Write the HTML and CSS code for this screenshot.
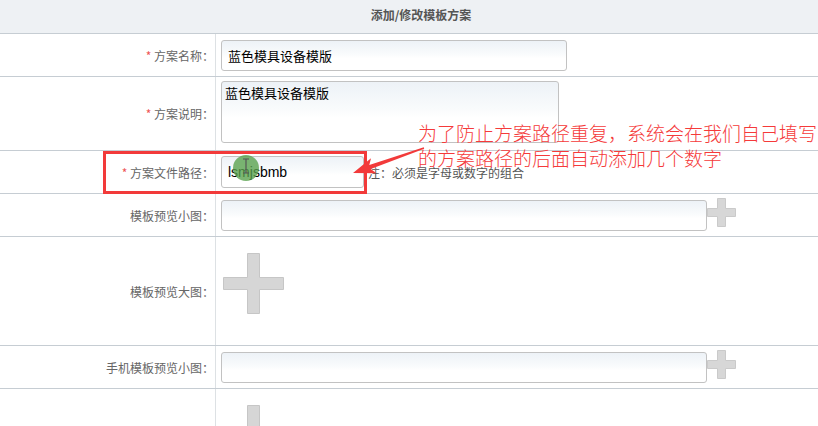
FILE: index.html
```html
<!DOCTYPE html>
<html lang="zh-CN">
<head>
  <meta charset="UTF-8">
  <title>添加/修改模板方案</title>
  <link rel="stylesheet" href="styles.css">
</head>
<body>

<div class="page">
    <div class="head">添加/修改模板方案</div>

    <div class="row">
        <div class="label"><span class="req">*</span>&nbsp;方案名称：</div>
        <div class="field"><input class="txt name" type="text" value="蓝色模具设备模版"></div>
    </div>

    <div class="row tall-2">
        <div class="label"><span class="req">*</span>&nbsp;方案说明：</div>
        <div class="field top-4"><textarea class="txt desc">蓝色模具设备模版</textarea></div>
    </div>

    <div class="row">
        <div class="label"><span class="req">*</span>&nbsp;方案文件路径：</div>
        <div class="field">
            <input class="txt path" type="text" value="lsmjsbmb">
            <span class="hint">注：必须是字母或数字的组合</span>
        </div>
    </div>

    <div class="row">
        <div class="label">模板预览小图：</div>
        <div class="field">
            <input class="txt upload" type="text" value="">
            <svg class="plus-s" width="29" height="29" viewBox="0 0 29 29">
                <path d="M10.5 0.5h8v10h10v8h-10v10h-8v-10h-10v-8h10z"/>
            </svg>
        </div>
    </div>

    <div class="row tall-5">
        <div class="label">模板预览大图：</div>
        <div class="field top-16">
            <svg class="plus-l" width="61" height="61" viewBox="0 0 61 61">
                <path d="M24.5 0.5h12v24h24v12h-24v24h-12v-24h-24v-12h24z"/>
            </svg>
        </div>
    </div>

    <div class="row">
        <div class="label">手机模板预览小图：</div>
        <div class="field">
            <input class="txt upload" type="text" value="">
            <svg class="plus-s" width="29" height="29" viewBox="0 0 29 29">
                <path d="M10.5 0.5h8v10h10v8h-10v10h-8v-10h-10v-8h10z"/>
            </svg>
        </div>
    </div>

    <div class="row tall-5">
        <div class="label">手机模板预览大图：</div>
        <div class="field top-16">
            <svg class="plus-l" width="61" height="61" viewBox="0 0 61 61">
                <path d="M24.5 0.5h12v24h24v12h-24v24h-12v-24h-24v-12h24z"/>
            </svg>
        </div>
    </div>
</div>

<!-- 截图标注 -->
<div class="mark-box"></div>
<div class="click-dot">
    <svg width="26" height="26" viewBox="0 0 26 26">
        <path d="M13 4v14M10 4h6M10 18h6" stroke="#555" stroke-width="1.2" fill="none"/>
    </svg>
</div>
<svg class="mark-arrow" width="818" height="426" viewBox="0 0 818 426">
    <polygon points="353,173 371,158.2 369.3,165.1 423.8,147.3 424.2,148.7 370.7,168.9 376.4,173.2"/>
</svg>
<div class="mark-text">为了防止方案路径重复，系统会在我们自己填写<br>的方案路径的后面自动添加几个数字</div>

</body>
</html>
```

FILE: styles.css
```css
body {
    margin: 0;
    font-family: "Noto Sans CJK SC", sans-serif;
    font-size: 12px;
    color: #666;
    background-color: #fff;
    overflow: hidden;
}

.head {
    height: 33px;
    line-height: 30px;
    border-bottom: 1px solid #c6cdd3;
    background-color: #eef1f4;
    text-align: center;
    padding-left: 24px;
    font-weight: bold;
    color: #555;
}

.row {
    display: grid;
    grid-template-columns: 216px 1fr;
    height: 42px;
    border-bottom: 1px solid #c6cdd3;
}

.tall-2 {
    height: 73px;
}

.tall-5 {
    height: 108px;
}

.label {
    display: flex;
    justify-content: flex-end;
    align-items: center;
    padding-right: 1px;
    border-right: 1px solid #dde1e4;
    color: #666;
}

.req {
    color: #e55;
}

.field {
    display: flex;
    align-items: center;
    padding-left: 5px;
}

.top-4 {
    align-items: flex-start;
    padding-top: 4px;
}

.top-16 {
    align-items: flex-start;
    padding-top: 16px;
}

.txt {
    box-sizing: border-box;
    height: 31px;
    margin: 0;
    padding: 0 6px;
    border: 1px solid #c2c2c2;
    border-radius: 3px;
    background: linear-gradient(#edf2f7, #f9fbfc 45%, #fff 60%);
    font-family: "Noto Sans CJK SC", sans-serif;
    font-size: 13px;
    color: #000;
    outline: none;
}

.name {
    width: 346px;
}

.desc {
    width: 338px;
    height: 62px;
    padding: 2px 3px;
    line-height: 18px;
    resize: none;
}

.path {
    width: 143px;
    height: 32px;
    font-family: "Liberation Sans", Arial, sans-serif;
    font-size: 14px;
}

.hint {
    margin-left: 4px;
    color: #555;
}

.upload {
    width: 486px;
}

.plus-s {
    margin-top: -5px;
    fill: #d7d7d7;
    stroke: #cacaca;
    stroke-linejoin: round;
}

.plus-l {
    margin-left: 2px;
    fill: #d6d6d6;
    stroke: #c6c6c6;
    stroke-linejoin: round;
}

/* 标注层 */
.mark-box {
    position: absolute;
    left: 103px;
    top: 151px;
    width: 258px;
    height: 37px;
    border: 3px solid #f23a3a;
}

.click-dot {
    position: absolute;
    left: 233px;
    top: 155px;
    width: 26px;
    height: 26px;
    border-radius: 50%;
    background-color: rgba(86, 160, 74, 0.78);
}

.click-dot svg {
    display: block;
}

.mark-arrow {
    position: absolute;
    left: 0;
    top: 0;
    fill: #f23a3a;
}

.mark-text {
    position: absolute;
    left: 418px;
    top: 120px;
    white-space: nowrap;
    font-size: 19px;
    line-height: 25px;
    font-weight: 300;
    color: #f53a3a;
}
```
